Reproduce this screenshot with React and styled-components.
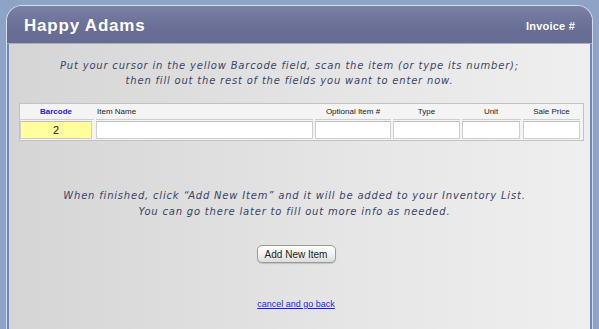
import React, { useState } from 'react'
import styled, { createGlobalStyle } from 'styled-components'

const GlobalStyle = createGlobalStyle`
  html, body {
    margin: 0;
    padding: 0;
    background: #8ea4c7;
  }
  body {
    font-family: "Liberation Sans", Arial, sans-serif;
  }
`

const Page = styled.div`
  width: 599px;
  height: 329px;
  padding: 5px 6px 0 6px;
  box-sizing: border-box;
  overflow: hidden;
`

const Panel = styled.div`
  height: 100%;
  border-radius: 16px 16px 0 0;
  border: 1px solid #d4ddec;
  border-bottom: none;
  background: #6f87b8;
  padding: 0 2px;
  display: flex;
  flex-direction: column;
`

const Header = styled.div`
  height: 35px;
  margin: 0 -2px;
  border-radius: 15px 15px 0 0;
  background: linear-gradient(#7b80a4, #686e95 60%, #666c92);
  border-bottom: 1px solid #a9adc2;
  display: flex;
  align-items: center;
  justify-content: space-between;
  padding: 2px 17px 0 17px;
  color: #fff;
`

const Title = styled.h1`
  margin: 0;
  font-size: 17px;
  font-weight: bold;
  letter-spacing: 0.8px;
`

const Invoice = styled.span`
  font-size: 11px;
  font-weight: bold;
  letter-spacing: 0.2px;
`

const Body = styled.div`
  flex: 1;
  background: linear-gradient(90deg, #d5d5d5, #e6e6e6 60%, #efefef);
  display: flex;
  flex-direction: column;
  align-items: center;
  padding: 14px 7px 0 0;
`

const Note = styled.p`
  margin: 0;
  padding-right: ${p => p.$shift || 0}px;
  font-family: "DejaVu Sans", Verdana, sans-serif;
  font-style: italic;
  font-size: 10px;
  letter-spacing: 0.8px;
  line-height: 15px;
  color: #3a4468;
  text-align: center;
`

const Table = styled.div`
  align-self: stretch;
  margin: 15px -1px 0 10px;
  border: 1px solid #c2c2c2;
  background: #f4f4f4;
`

const Row = styled.div`
  display: grid;
  grid-template-columns: 74px 217px 76px 67px 59px 57px;
  column-gap: 2px;
`

const HeadCell = styled.div`
  height: 15px;
  line-height: 15px;
  font-size: 8px;
  color: ${p => (p.$key ? '#2323c8' : '#222')};
  font-weight: ${p => (p.$key ? 'bold' : 'normal')};
  text-align: ${p => p.$align || 'center'};
  padding-left: ${p => (p.$align === 'left' ? '1px' : '0')};
  padding-right: ${p => (p.$trim ? `${p.$trim}px` : '0')};
  border-bottom: 1px solid #cfcfcf;
`

const Field = styled.input`
  box-sizing: border-box;
  height: 18px;
  width: ${p => (p.$w ? `${p.$w}px` : '100%')};
  min-width: 0;
  margin: 1px 0;
  border: 1px solid #cfcfcf;
  border-top-color: #bdbdbd;
  background: ${p => (p.$hilite ? '#ffff9c' : '#fff')};
  font-family: "Liberation Sans", Arial, sans-serif;
  font-size: 11px;
  color: #222;
  text-align: center;
  padding: 0;
  outline: none;
`

const Note2 = styled(Note)`
  margin-top: 47px;
  line-height: 16px;
`

const Button = styled.button`
  margin-top: 25px;
  width: 79px;
  height: 18px;
  border: 1px solid #9a9a9a;
  border-radius: 5px;
  background: linear-gradient(#ffffff, #f2f2f2 50%, #dcdcdc);
  box-shadow: 0 1px 1px rgba(0, 0, 0, 0.15);
  font-family: "Liberation Sans", Arial, sans-serif;
  font-size: 10px;
  color: #222;
  padding: 0;
`

const CancelLink = styled.a`
  margin-top: 36px;
  font-size: 9px;
  color: #1a1aff;
  text-decoration: underline;
`

export default function App() {
  const [barcode, setBarcode] = useState('2')
  return (
    <>
      <GlobalStyle />
      <Page>
        <Panel>
          <Header>
            <Title>Happy Adams</Title>
            <Invoice>Invoice #</Invoice>
          </Header>
          <Body>
            <Note $shift={13}>
              Put your cursor in the yellow Barcode field, scan the item (or type its number);<br />
              then fill out the rest of the fields you want to enter now.
            </Note>
            <Table>
              <Row>
                <HeadCell $key $trim={2}>Barcode</HeadCell>
                <HeadCell $align="left">Item Name</HeadCell>
                <HeadCell>Optional Item #</HeadCell>
                <HeadCell>Type</HeadCell>
                <HeadCell $trim={1}>Unit</HeadCell>
                <HeadCell>Sale Price</HeadCell>
              </Row>
              <Row>
                <Field $hilite $w={72} value={barcode} onChange={e => setBarcode(e.target.value)} />
                <Field />
                <Field />
                <Field />
                <Field $w={58} />
                <Field />
              </Row>
            </Table>
            <Note2 $shift={3}>
              When finished, click “Add New Item” and it will be added to your Inventory List.<br />
              You can go there later to fill out more info as needed.
            </Note2>
            <Button>Add New Item</Button>
            <CancelLink href="#">cancel and go back</CancelLink>
          </Body>
        </Panel>
      </Page>
    </>
  )
}
